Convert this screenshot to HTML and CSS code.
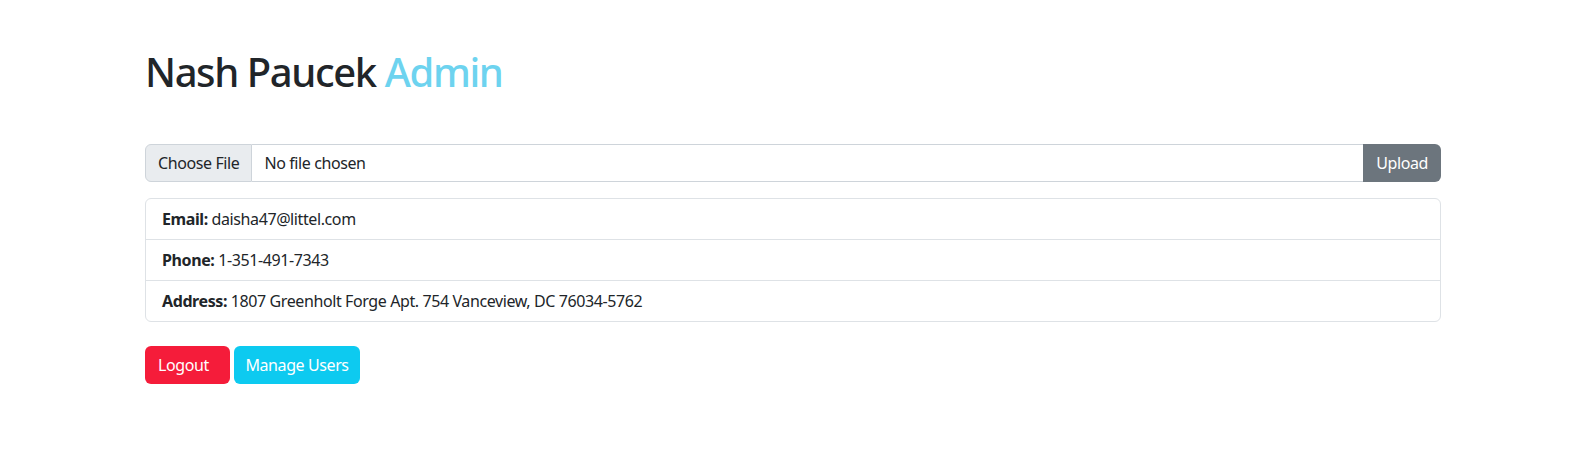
FILE: index.html
```html
<!DOCTYPE html>
<html>
<head>
<meta charset="utf-8">
<link rel="stylesheet" href="styles.css">
</head>
<body>
<div class="container">
  <h1 class="title">Nash Paucek <span class="role">Admin</span></h1>
  <form class="upload-group">
    <label class="file-btn">Choose File</label>
    <span class="file-name">No file chosen</span>
    <button type="button" class="btn btn-upload">Upload</button>
  </form>
  <ul class="info-list">
    <li class="info-item"><b>Email:</b> daisha47@littel.com</li>
    <li class="info-item"><b>Phone:</b> 1-351-491-7343</li>
    <li class="info-item"><b>Address:</b> 1807 Greenholt Forge Apt. 754 Vanceview, DC 76034-5762</li>
  </ul>
  <div class="actions">
    <button type="button" class="btn btn-logout">Logout</button>
    <button type="button" class="btn btn-manage">Manage Users</button>
  </div>
</div>
</body>
</html>
```
FILE: styles.css
```css
* { box-sizing: border-box; }
body {
  margin: 0;
  font-family: "Noto Sans", "Open Sans", sans-serif;
  font-size: 16px;
  line-height: 1.5;
  letter-spacing: -0.025em;
  color: #212529;
  background: #fff;
}
.container {
  width: 1320px;
  margin: 0 auto;
  padding: 48px 12px 0;
}
.title {
  margin: 0 0 48px;
  font-size: 40px;
  font-weight: 500;
  line-height: 1.2;
  letter-spacing: -0.035em;
}
.role { color: #6dd3ef; }
.upload-group {
  display: flex;
  height: 38px;
  margin: 0 0 16px;
}
.file-btn {
  display: flex;
  align-items: center;
  padding: 0 12px;
  background: #e9ecef;
  border: 1px solid #ced4da;
  border-radius: 6px 0 0 6px;
  color: #212529;
}
.file-name {
  flex: 1;
  display: flex;
  align-items: center;
  padding: 0 12px;
  border: 1px solid #ced4da;
  border-left: 0;
  border-right: 0;
}
.btn {
  font: inherit;
  letter-spacing: inherit;
  white-space: nowrap;
  height: 38px;
  padding: 0 12px;
  border: 1px solid transparent;
  border-radius: 6px;
  color: #fff;
  cursor: pointer;
}
.btn-upload {
  background: #6c757d;
  border-radius: 0 6px 6px 0;
}
.info-list {
  list-style: none;
  margin: 0 0 24px;
  padding: 0;
  border: 1px solid #dee2e6;
  border-radius: 6px;
}
.info-item {
  padding: 8px 16px;
  border-top: 1px solid #dee2e6;
}
.info-item:first-child { border-top: 0; }
.actions { display: flex; gap: 4px; }
.btn-logout { background: #f51c3a; width: 85px; text-align: left; }
.btn-manage { background: #0dcaf0; width: 126px; text-align: center; padding: 0; }
```
